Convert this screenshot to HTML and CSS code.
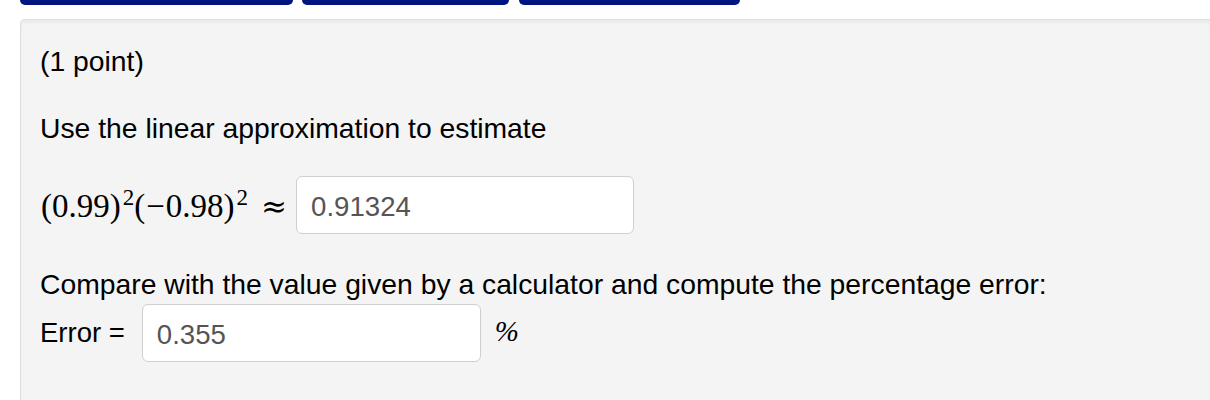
FILE: index.html
```html
<!DOCTYPE html>
<html>
<head>
<meta charset="utf-8">
<link rel="stylesheet" href="styles.css">
</head>
<body>
<nav class="tabs">
  <span class="tab tab-a"></span>
  <span class="tab tab-b"></span>
  <span class="tab tab-c"></span>
</nav>
<div class="problem">
  <p class="points">(1 point)</p>
  <p class="intro">Use the linear approximation to estimate</p>
  <div class="math-row">
    <span class="math">(0.99)<sup>2</sup>(<span class="minus">−</span>0.98)<sup>2</sup><span class="approx">≈</span></span>
    <input class="answer answer-1" type="text" value="0.91324">
  </div>
  <p class="compare">Compare with the value given by a calculator and compute the percentage error:</p>
  <div class="error-row">
    <span class="label">Error =</span>
    <input class="answer answer-2" type="text" value="0.355">
    <span class="pct">%</span>
  </div>
</div>
</body>
</html>
```

FILE: styles.css
```css
html, body {
  margin: 0;
  padding: 0;
  background: #ffffff;
  overflow: hidden;
}
body {
  font-family: "Liberation Sans", Arial, Helvetica, sans-serif;
  color: #000;
  width: 1210px;
  height: 400px;
}
.tabs {
  display: flex;
  height: 5px;
  padding-left: 20px;
}
.tab {
  display: block;
  height: 5px;
  background: #00157f;
  border-radius: 0 0 7px 7px;
}
.tab-a { width: 273px; margin-right: 9px; }
.tab-b { width: 207px; margin-right: 10px; }
.tab-c { width: 221px; }
.problem {
  margin: 14px 0 0 20px;
  background: #f4f4f4;
  border: 1px solid #dedede;
  border-right: none;
  border-bottom: none;
  border-radius: 5px 0 0 0;
  box-shadow: inset 0 3px 3px rgba(0,0,0,0.04);
  padding: 26px 0 60px 19px;
  height: 400px;
  box-sizing: border-box;
}
p {
  margin: 0;
  font-size: 28.3px;
  line-height: 30px;
}
.intro { margin-top: 37px; }
.math-row {
  display: flex;
  align-items: center;
  margin-top: 33px;
}
.math {
  font-family: "Liberation Serif", "Times New Roman", serif;
  font-size: 33px;
  white-space: nowrap;
  margin-right: 9px;
  margin-top: 2px;
  padding-left: 1px;
}
.math sup {
  font-size: 23px;
  vertical-align: 0;
  position: relative;
  top: -12px;
  margin-left: 2px;
}
.minus { margin: 0 1px 0 1px; }
.approx {
  font-family: "DejaVu Serif", serif;
  font-size: 31px;
  margin-left: 13px;
}
.answer {
  font-family: "Liberation Sans", Arial, Helvetica, sans-serif;
  font-size: 27.6px;
  color: #555;
  background: #fff;
  border: 1px solid #cfcfcf;
  border-radius: 6px;
  height: 58px;
  box-sizing: border-box;
  padding: 4px 14px 0;
  margin: 0;
  outline: none;
}
.answer-1 { width: 338px; }
.answer-2 { width: 339px; }
.compare { margin-top: 35px; }
.error-row {
  display: flex;
  align-items: center;
  margin-top: 5px;
}
.label {
  font-size: 27.5px;
  margin-right: 17px;
}
.pct {
  font-family: "Liberation Serif", "Times New Roman", serif;
  font-style: italic;
  font-size: 29px;
  margin-left: 14px;
  margin-top: -4px;
}
```
